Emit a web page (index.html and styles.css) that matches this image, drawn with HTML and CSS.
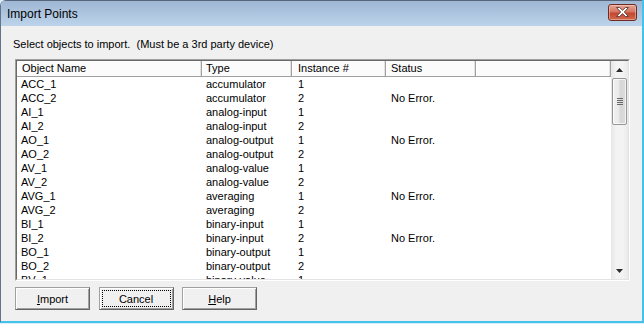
FILE: index.html
```html
<!DOCTYPE html>
<html lang="en">
<head>
  <meta charset="UTF-8" />
  <title>Import Points</title>
  <link rel="stylesheet" href="styles.css">
</head>
<body>
  <div class="window">
    <div class="titlebar">
      <span class="title">Import Points</span>
      <div class="close">
        <svg width="13" height="10" viewBox="0 0 13 10">
          <polygon points="0.5,0.5 3.5,0.5 6.5,3.3 9.5,0.5 12.5,0.5 8.3,5 12.5,9.5 9.5,9.5 6.5,6.7 3.5,9.5 0.5,9.5 4.7,5" fill="#fff" stroke="#5a3a34" stroke-width="0.9"/>
        </svg>
      </div>
    </div>

    <div class="client">
      <p class="prompt">Select objects to import.  (Must be a 3rd party device)</p>

      <div class="listview">
        <div class="listview-inner">
          <div class="grid">
            <div class="header">
              <span class="c1">Object Name</span>
              <span class="c2">Type</span>
              <span class="c3">Instance #</span>
              <span class="c4">Status</span>
              <span class="c5"></span>
            </div>
            <div class="rows">
              <div class="row"><span class="c1">ACC_1</span><span class="c2">accumulator</span><span class="c3">1</span><span class="c4"></span></div>
              <div class="row"><span class="c1">ACC_2</span><span class="c2">accumulator</span><span class="c3">2</span><span class="c4">No Error.</span></div>
              <div class="row"><span class="c1">AI_1</span><span class="c2">analog-input</span><span class="c3">1</span><span class="c4"></span></div>
              <div class="row"><span class="c1">AI_2</span><span class="c2">analog-input</span><span class="c3">2</span><span class="c4"></span></div>
              <div class="row"><span class="c1">AO_1</span><span class="c2">analog-output</span><span class="c3">1</span><span class="c4">No Error.</span></div>
              <div class="row"><span class="c1">AO_2</span><span class="c2">analog-output</span><span class="c3">2</span><span class="c4"></span></div>
              <div class="row"><span class="c1">AV_1</span><span class="c2">analog-value</span><span class="c3">1</span><span class="c4"></span></div>
              <div class="row"><span class="c1">AV_2</span><span class="c2">analog-value</span><span class="c3">2</span><span class="c4"></span></div>
              <div class="row"><span class="c1">AVG_1</span><span class="c2">averaging</span><span class="c3">1</span><span class="c4">No Error.</span></div>
              <div class="row"><span class="c1">AVG_2</span><span class="c2">averaging</span><span class="c3">2</span><span class="c4"></span></div>
              <div class="row"><span class="c1">BI_1</span><span class="c2">binary-input</span><span class="c3">1</span><span class="c4"></span></div>
              <div class="row"><span class="c1">BI_2</span><span class="c2">binary-input</span><span class="c3">2</span><span class="c4">No Error.</span></div>
              <div class="row"><span class="c1">BO_1</span><span class="c2">binary-output</span><span class="c3">1</span><span class="c4"></span></div>
              <div class="row"><span class="c1">BO_2</span><span class="c2">binary-output</span><span class="c3">2</span><span class="c4"></span></div>
              <div class="row"><span class="c1">BV_1</span><span class="c2">binary-value</span><span class="c3">1</span><span class="c4"></span></div>
            </div>
          </div>

          <div class="scrollbar">
            <div class="arrow">
              <svg width="7" height="4" viewBox="0 0 7 4"><polygon points="3.5,0 7,4 0,4" fill="#2b2b2b"/></svg>
            </div>
            <div class="thumb">
              <span class="grip"></span>
              <span class="grip"></span>
              <span class="grip"></span>
              <span class="grip"></span>
            </div>
            <div class="track"></div>
            <div class="arrow">
              <svg width="7" height="4" viewBox="0 0 7 4"><polygon points="0,0 7,0 3.5,4" fill="#2b2b2b"/></svg>
            </div>
          </div>
        </div>
      </div>

      <div class="buttons">
        <div class="btn"><span class="label"><u>I</u>mport</span></div>
        <div class="btn"><span class="label focus">Cancel</span></div>
        <div class="btn"><span class="label"><u>H</u>elp</span></div>
      </div>
    </div>
  </div>
</body>
</html>
```

FILE: styles.css
```css
* {
  margin: 0;
  padding: 0;
  box-sizing: border-box;
}
body {
  width: 644px;
  height: 324px;
  overflow: hidden;
  background: #d9eef8;
  font-family: 'Liberation Sans', Arial, sans-serif;
  font-size: 11px;
  color: #000;
}
.window {
  width: 644px;
  height: 323px;
  display: flex;
  flex-direction: column;
  background: #f0f0f0;
  border-left: 1px solid #62738a;
  border-right: 2px solid #45c2ec;
  border-bottom: 2px solid #45c2ec;
  border-top-left-radius: 6px;
  overflow: hidden;
}
.titlebar {
  height: 26px;
  flex: none;
  display: flex;
  align-items: center;
  justify-content: space-between;
  padding: 0 5px 0 6px;
  background: linear-gradient(#9fb7d3, #bcd3eb);
  border-top: 1px solid #56677d;
}
.title {
  font-size: 12px;
  margin-top: 1px;
}
.close {
  width: 29px;
  height: 17px;
  margin-top: -3px;
  display: flex;
  align-items: center;
  justify-content: center;
  border: 1px solid #6e2b21;
  border-radius: 3px;
  background: linear-gradient(#e4a594, #d67562 45%, #c5472f 55%, #d0694f);
  box-shadow: inset 0 0 0 1px rgba(255, 220, 210, 0.45);
}
.client {
  flex: 1;
  padding: 11px 0 0 14px;
}
.prompt {
  white-space: pre;
  line-height: 14px;
  margin-left: -2px;
}
.listview {
  margin-top: 8px;
  width: 615px;
  height: 222px;
  border: 1px solid;
  border-color: #a0a0a0 #fff #fff #a0a0a0;
}
.listview-inner {
  height: 100%;
  display: flex;
  border: 1px solid;
  border-color: #696969 #e3e3e3 #e3e3e3 #696969;
  background: #fff;
}
.grid {
  flex: 1;
  overflow: hidden;
}
.header {
  height: 16px;
  display: flex;
  background: #fbfbfb;
  border-bottom: 1px solid #a0a0a0;
}
.header span {
  line-height: 15px;
  border-right: 1px solid #a0a0a0;
  box-shadow: inset 1px 0 #fff, inset -1px 0 #e3e3e3;
}
.header .c1 {
  padding-left: 5px;
}
.header .c5 {
  flex: 1;
}
.row {
  display: flex;
  height: 14px;
  line-height: 14px;
}
.c1,
.c2,
.c3,
.c4 {
  flex: none;
  white-space: nowrap;
}
.c1 {
  width: 185px;
  padding-left: 4px;
}
.c2 {
  width: 90px;
  padding-left: 4px;
}
.c3 {
  width: 94px;
  padding-left: 6px;
}
.c4 {
  width: 90px;
  padding-left: 5px;
}
.scrollbar {
  width: 17px;
  flex: none;
  display: flex;
  flex-direction: column;
  background: linear-gradient(90deg, #e6e6e6, #f3f3f3 30%, #f3f3f3 70%, #e9e9e9);
}
.arrow {
  height: 17px;
  display: flex;
  align-items: center;
  justify-content: center;
}
.thumb {
  height: 47px;
  margin: 0 1px;
  border: 1px solid #979797;
  border-radius: 2px;
  background: linear-gradient(90deg, #f2f2f2, #e9e9e9 45%, #d6d6d6 55%, #dcdcdc);
  box-shadow: inset 0 0 0 1px rgba(255, 255, 255, 0.7);
  display: flex;
  flex-direction: column;
  align-items: center;
  justify-content: center;
  gap: 1px;
}
.grip {
  width: 6px;
  height: 1px;
  background: #6a6a6a;
}
.track {
  flex: 1;
}
.buttons {
  display: flex;
  gap: 8.5px;
  margin-top: 6px;
}
.btn {
  width: 75px;
  height: 23px;
  display: flex;
  border: 1px solid;
  border-color: #a0a0a0 #646464 #646464 #a0a0a0;
  box-shadow: inset 1px 1px #fff, inset -1px -1px #a0a0a0;
  background: #f0f0f0;
}
.label {
  flex: 1;
  display: flex;
  align-items: center;
  justify-content: center;
  margin: 2px;
  border: 1px solid transparent;
}
.label.focus {
  border: 1px dotted #000;
}
```
